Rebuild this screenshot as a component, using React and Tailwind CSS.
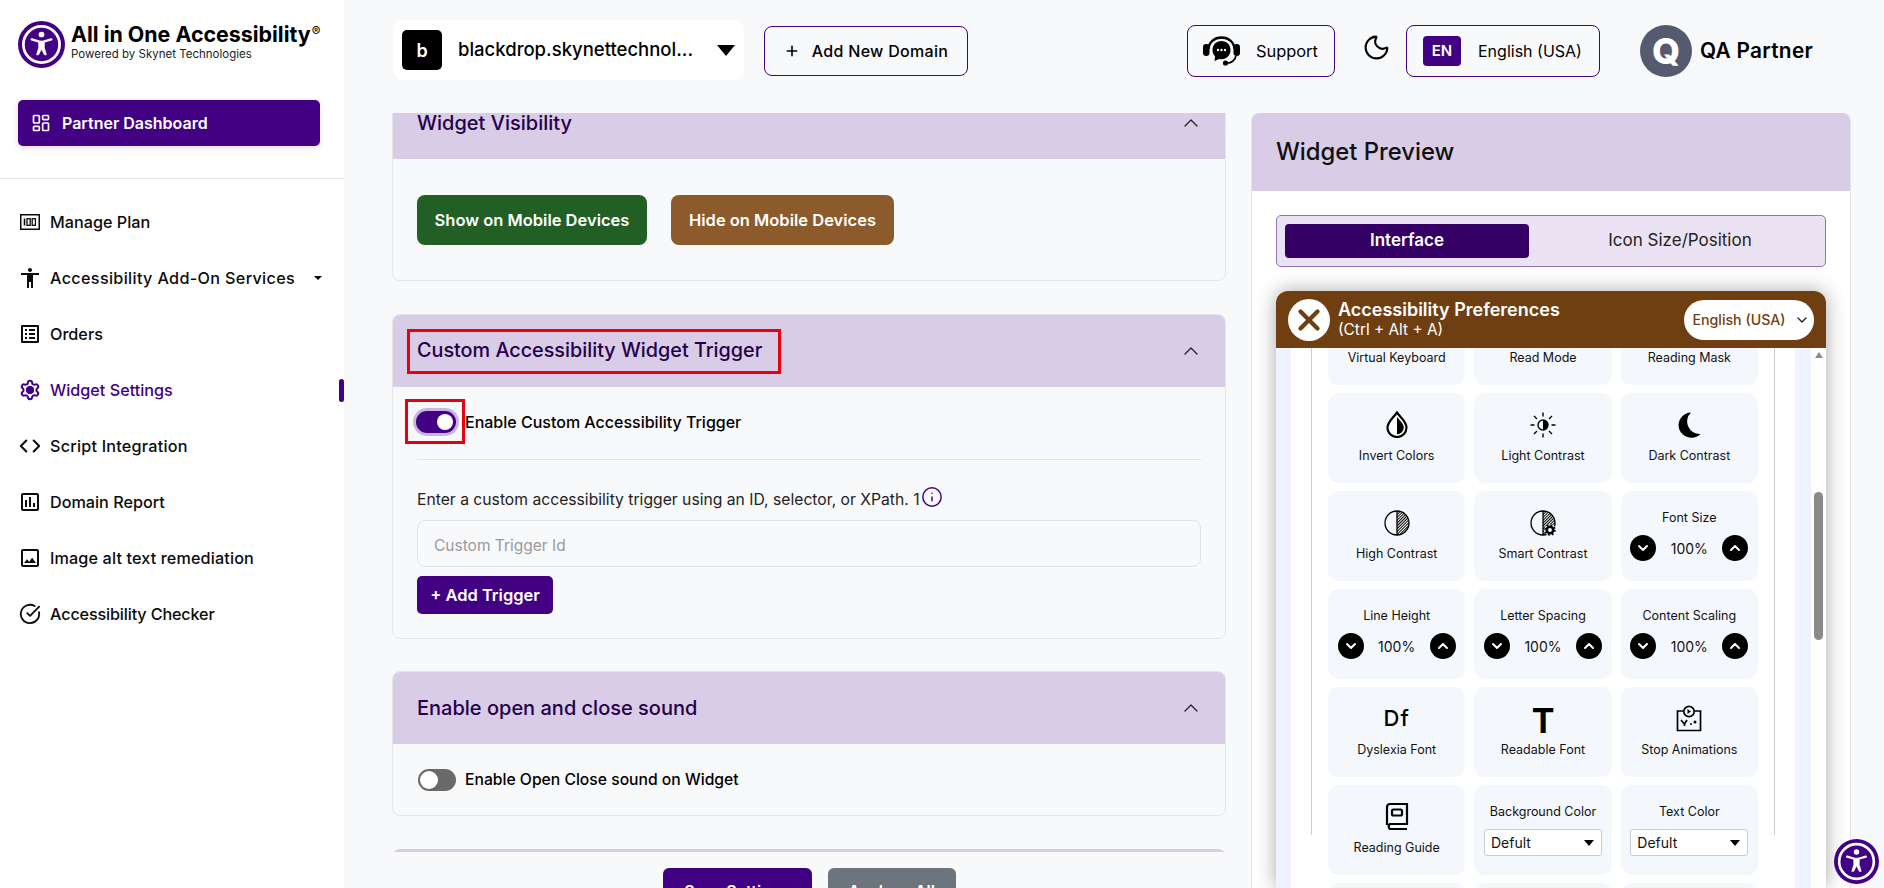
import React from 'react';
import { ChevronUp, ChevronDown, LayoutDashboard, Settings, CircleCheckBig, Code, Info, Moon, Plus, X } from 'lucide-react';
import { MdAccessibility, MdOutlineListAlt, MdOutlineAssessment, MdOutlineImage } from 'react-icons/md';

const navItems = [
  { label: 'Manage Plan', icon: <PlanIcon /> },
  { label: 'Accessibility Add-On Services', icon: <MdAccessibility size={24} />, caret: true, track: 'tracking-[0.33px]' },
  { label: 'Orders', icon: <MdOutlineListAlt size={24} /> },
  { label: 'Widget Settings', icon: <GearIcon />, active: true },
  { label: 'Script Integration', icon: <Code size={22} strokeWidth={2.2} />, track: 'tracking-[0.22px]' },
  { label: 'Domain Report', icon: <MdOutlineAssessment size={24} /> },
  { label: 'Image alt text remediation', icon: <MdOutlineImage size={24} />, track: 'tracking-[0.13px]' },
  { label: 'Accessibility Checker', icon: <CircleCheckBig size={22} strokeWidth={2} />, track: 'tracking-[-0.15px]' },
];

function PlanIcon() {
  return (
    <svg width="20" height="16" viewBox="0 0 20 16" fill="none" stroke="currentColor">
      <rect x="0.75" y="0.75" width="18.5" height="14.5" strokeWidth="1.5" />
      <path d="M4.5 4.5v7" strokeWidth="1.6" />
      <rect x="7" y="4.7" width="3.2" height="6.6" strokeWidth="1.3" />
      <rect x="12.2" y="4.7" width="3.2" height="6.6" strokeWidth="1.3" />
    </svg>
  );
}

function GearIcon() {
  return (
    <span className="relative flex items-center justify-center">
      <Settings size={22} strokeWidth={2.2} />
      <span className="absolute h-[8px] w-[8px] rounded-full bg-[#420083]" />
    </span>
  );
}

function A11yLogo({ size }) {
  return (
    <svg width={size} height={size} viewBox="0 0 48 48">
      <circle cx="24" cy="24" r="24" fill="#420083" />
      <circle cx="24" cy="24" r="18.5" fill="none" stroke="#fff" strokeWidth="2.8" />
      <circle cx="24" cy="13.8" r="2.9" fill="#fff" />
      <path d="M14 18.8 21 20.8M34 18.8 27 20.8" stroke="#fff" strokeWidth="2.4" strokeLinecap="round" />
      <path d="M21 20.5H27L26.8 27L29 34.5H27L24 28.5L21 34.5H19L21.2 27Z" fill="#fff" stroke="#fff" strokeWidth="0.8" strokeLinejoin="round" />
    </svg>
  );
}

function SupportIcon() {
  return (
    <svg width="37" height="30" viewBox="0 0 37 30">
      <path d="M5.500 13C6 6 11.500 1.500 18.500 1.500S31 6 31.500 13" fill="none" stroke="#000" strokeWidth="2.400" />
      <rect x="0" y="8" width="6.500" height="12" rx="3.200" fill="#000" />
      <rect x="30.500" y="8" width="6.500" height="12" rx="3.200" fill="#000" />
      <path d="M18.500 5C13.300 5 9.500 8.900 9.500 14c0 2.500 1 4.800 2.600 6.400L11.500 25l4.600-2c.8.200 1.600.300 2.400.300 5.200 0 9-4.100 9-9.300S23.700 5 18.500 5Z" fill="#000" />
      <circle cx="15" cy="14" r="1.200" fill="#fff" />
      <circle cx="18.500" cy="14" r="1.200" fill="#fff" />
      <circle cx="22" cy="14" r="1.200" fill="#fff" />
      <path d="M33 19.500c-.5 4.500-4.500 7.500-9 7.700" fill="none" stroke="#000" strokeWidth="1.800" />
      <circle cx="22.500" cy="27" r="2.600" fill="#000" />
    </svg>
  );
}

function Hatch({ id }) {
  return (
    <defs>
      <pattern id={id} width="2" height="2" patternUnits="userSpaceOnUse" patternTransform="rotate(45)">
        <rect width="2" height="2" fill="#fff" />
        <rect width="1" height="2" fill="#000" />
      </pattern>
    </defs>
  );
}

function InvertIcon() {
  return (
    <svg width="22" height="27" viewBox="0 0 22 27">
      <path d="M11 1.500C7 7 1.500 11 1.500 16.500a9.500 9.500 0 0 0 19 0C20.500 11 15 7 11 1.500Z" fill="#fff" stroke="#000" strokeWidth="2.200" />
      <path d="M11 6C14 9.500 17.800 13 17.800 16.500A6.800 6.800 0 0 1 11 23.300Z" fill="#000" />
    </svg>
  );
}

function LightIcon() {
  return (
    <svg width="26" height="26" viewBox="0 0 26 26" fill="none" stroke="#000" strokeWidth="1.400">
      <circle cx="13" cy="13" r="5" />
      <path d="M13 8a5 5 0 0 1 0 10Z" fill="#000" stroke="none" />
      <path d="M13 0.500v4M13 21.500v4M0.500 13h4M21.500 13h4M4 4l3 3M19 19l3 3M22 4l-3 3M7 19l-3 3" />
    </svg>
  );
}

function DarkIcon() {
  return (
    <svg width="24" height="26" viewBox="0 0 24 26">
      <path d="M14 0.500A12.500 12.500 0 0 0 23.500 22 13 13 0 0 1 1.500 13 13 13 0 0 1 14 0.500Z" fill="#000" />
    </svg>
  );
}

function HighIcon() {
  return (
    <svg width="26" height="26" viewBox="0 0 26 26">
      <Hatch id="high" />
      <path d="M13 1a12 12 0 0 1 0 24Z" fill="url(#high)" />
      <circle cx="13" cy="13" r="12" fill="none" stroke="#000" strokeWidth="1.300" />
      <path d="M13 1v24" stroke="#000" strokeWidth="1.300" />
    </svg>
  );
}

function SmartIcon() {
  return (
    <svg width="26" height="26" viewBox="0 0 26 26">
      <Hatch id="smart" />
      <path d="M13 1a12 12 0 0 1 0 24Z" fill="url(#smart)" />
      <circle cx="13" cy="13" r="12" fill="none" stroke="#000" strokeWidth="1.300" />
      <path d="M13 1v24" stroke="#000" strokeWidth="1.300" />
      <circle cx="20" cy="20" r="5.800" fill="#f4f8fd" />
      <circle cx="20" cy="20" r="3.200" fill="#fff" stroke="#000" strokeWidth="2.600" />
      <circle cx="20" cy="20" r="5" fill="none" stroke="#000" strokeWidth="1.600" strokeDasharray="1.900 2" />
    </svg>
  );
}

function StopIcon() {
  return (
    <svg width="26" height="27" viewBox="0 0 26 27" fill="none" stroke="#000" strokeWidth="1.700">
      <path d="M8 6H1.500v19.500h23V6H18" />
      <circle cx="13" cy="6.500" r="5.200" />
      <path d="M11.500 4v5l3.500-2.500Z" fill="#000" stroke="none" />
      <path d="M5 15l3.500 4L11 15M8.500 19v2" />
      <circle cx="19" cy="17" r="1.500" fill="#000" stroke="none" />
      <circle cx="15" cy="19" r="1" fill="#000" stroke="none" />
    </svg>
  );
}

function GuideIcon() {
  return (
    <svg width="24" height="27" viewBox="0 0 24 27" fill="none" stroke="#000" strokeWidth="2.200">
      <path d="M2 22V4a3 3 0 0 1 3-3h17v20H5a3 3 0 0 0 0 5h17" />
      <rect x="7" y="6.500" width="10" height="6" rx="1.500" />
    </svg>
  );
}

const tileRows = [
  [{ label: 'Virtual Keyboard' }, { label: 'Read Mode' }, { label: 'Reading Mask' }],
  [{ label: 'Invert Colors', icon: <InvertIcon /> }, { label: 'Light Contrast', icon: <LightIcon /> }, { label: 'Dark Contrast', icon: <DarkIcon /> }],
  [{ label: 'High Contrast', icon: <HighIcon /> }, { label: 'Smart Contrast', icon: <SmartIcon /> }, { label: 'Font Size', stepper: true }],
  [{ label: 'Line Height', stepper: true }, { label: 'Letter Spacing', stepper: true }, { label: 'Content Scaling', stepper: true }],
  [
    { label: 'Dyslexia Font', icon: <span className="mb-[3px] text-[22px] leading-none font-medium tracking-[1px]">Df</span> },
    { label: 'Readable Font', icon: <span className="translate-y-[6px] text-[34px] leading-none font-bold">T</span> },
    { label: 'Stop Animations', icon: <StopIcon /> },
  ],
  [{ label: 'Reading Guide', icon: <GuideIcon /> }, { label: 'Background Color', select: true }, { label: 'Text Color', select: true }],
  [{ label: '' }, { label: '' }, { label: '' }],
];

function Tile({ tile }) {
  if (tile.stepper) {
    return (
      <div className="flex h-[90px] flex-col items-center rounded-[10px] bg-[#f4f8fd] pt-[18px]">
        <span className="h-[18px] text-[12.5px] leading-[18px] text-[#111]">{tile.label}</span>
        <div className="mt-[8px] flex w-[118px] items-center justify-between">
          <span className="flex h-[26px] w-[26px] items-center justify-center rounded-full bg-black text-white"><ChevronDown size={16} strokeWidth={3} /></span>
          <span className="text-[14px] text-[#111]">100%</span>
          <span className="flex h-[26px] w-[26px] items-center justify-center rounded-full bg-black text-white"><ChevronUp size={16} strokeWidth={3} /></span>
        </div>
      </div>
    );
  }
  if (tile.select) {
    return (
      <div className="flex h-[90px] flex-col items-center rounded-[10px] bg-[#f4f8fd] pt-[18px]">
        <span className="h-[18px] text-[12.5px] leading-[18px] text-[#111]">{tile.label}</span>
        <div className="mt-[8px] flex h-[27px] w-[118px] items-center justify-between rounded-[3px] border border-[#ccc] bg-white pr-[7px] pl-[6px]">
          <span className="text-[14px] text-[#111]">Defult</span>
          <span className="h-0 w-0 border-x-[5px] border-t-[6px] border-x-transparent border-t-black" />
        </div>
      </div>
    );
  }
  return (
    <div className="flex h-[90px] flex-col items-center rounded-[10px] bg-[#f4f8fd]">
      <div className="flex h-[54px] items-end justify-center pb-[9px] text-black">{tile.icon}</div>
      <span className="h-[18px] text-[12.5px] leading-[18px] text-[#111]">{tile.label}</span>
    </div>
  );
}

function Toggle({ on }) {
  if (on) {
    return (
      <span className="flex h-[22px] w-[40px] items-center justify-end rounded-full bg-[#420083] pr-[3px] ring-[3px] ring-[#c9b4e3]">
        <span className="h-[16px] w-[16px] rounded-full bg-white" />
      </span>
    );
  }
  return (
    <span className="flex h-[22px] w-[38px] items-center rounded-full bg-[#6a6a6a] pl-[2px]">
      <span className="h-[18px] w-[18px] rounded-full bg-white" />
    </span>
  );
}

function Card({ title, titleBoxed, children, className }) {
  return (
    <section className={`overflow-hidden rounded-[8px] border border-[#e4e5ea] ${className}`}>
      <div className="flex h-[72px] items-center justify-between bg-[#d9cce6] pr-[22px] pl-[24px]">
        {titleBoxed ? (
          <h3 className="-ml-[10px] flex h-[45px] w-[374px] items-center border-[3px] border-[#e60012] pl-[7px] text-[19.8px] font-medium whitespace-nowrap text-[#24004a]">{title}</h3>
        ) : (
          <h3 className="text-[20px] font-medium text-[#24004a]">{title}</h3>
        )}
        <ChevronUp size={24} strokeWidth={1.3} className="text-[#222]" />
      </div>
      {children}
    </section>
  );
}

export default function App() {
  return (
    <div className="relative flex h-screen overflow-hidden bg-[#f8f9fb] font-['Inter',sans-serif] text-black">
      <aside className="w-[344px] shrink-0 bg-white">
        <div className="flex h-[100px] items-start pt-[21px] pl-[18px]">
          <A11yLogo size={47} />
          <div className="ml-[6px] flex flex-col">
            <span className="text-[21.4px] leading-[26px] font-bold whitespace-nowrap">All in One Accessibility<sup className="ml-[1px] text-[13px] font-normal">®</sup></span>
            <span className="text-[11.5px] leading-[14px] text-[#222]">Powered by Skynet Technologies</span>
          </div>
        </div>
        <div className="pr-[24px] pl-[18px]">
          <a className="flex h-[46px] items-center gap-[11px] rounded-[5px] bg-[#420083] pl-[13px] text-[16px] font-semibold text-white shadow-[0_2px_6px_rgba(66,0,131,0.15)]">
            <LayoutDashboard size={20} strokeWidth={2} />
            Partner Dashboard
          </a>
        </div>
        <div className="mt-[32px] border-t border-[#e5e6ea]" />
        <nav className="pt-[15px]">
          {navItems.map((item) => (
            <a key={item.label} className={`relative flex h-[56px] items-center pl-[18px] text-[16.2px] font-medium ${item.active ? 'text-[#420083]' : 'text-[#0c0c0c]'}`}>
              <span className="flex w-[24px] justify-center">{item.icon}</span>
              <span className={`ml-[8px] whitespace-nowrap ${item.track || ''}`}>{item.label}</span>
              {item.caret && <span className="ml-[19px] h-0 w-0 border-x-[4px] border-t-[4px] border-x-transparent border-t-black" />}
              {item.active && <span className="absolute top-[17px] right-0 h-[23px] w-[5px] rounded-full bg-[#420083]" />}
            </a>
          ))}
        </nav>
      </aside>

      <main className="flex min-w-0 flex-1 flex-col">
        <header className="flex h-[113px] shrink-0 pt-[20px] pl-[49px]">
          <div className="flex h-[60px] w-[351px] items-center rounded-[10px] bg-white pl-[9px]">
            <span className="flex h-[40px] w-[40px] items-center justify-center rounded-[5px] bg-black text-[18px] font-semibold text-white">b</span>
            <span className="ml-[16px] w-[254px] text-[18.5px] font-medium whitespace-nowrap">blackdrop.skynettechnol...</span>
            <span className="ml-[5px] h-0 w-0 border-x-[9px] border-t-[11px] border-x-transparent border-t-black" />
          </div>
          <a className="mt-[6px] ml-[20px] flex h-[50px] w-[204px] items-center justify-center gap-[12px] rounded-[8px] border border-[#420083] text-[16px] font-medium tracking-[0.3px] whitespace-nowrap">
            <Plus size={16} strokeWidth={2.4} />
            Add New Domain
          </a>
          <a className="mt-[5px] ml-[219px] flex h-[52px] w-[148px] items-center rounded-[8px] border border-[#420083] pl-[15px]">
            <SupportIcon />
            <span className="ml-[16px] text-[16.4px]">Support</span>
          </a>
          <Moon size={29} strokeWidth={1.7} className="mt-[13px] ml-[27px]" />
          <a className="mt-[5px] ml-[15px] flex h-[52px] w-[194px] items-center rounded-[8px] border border-[#420083] pl-[16px]">
            <span className="flex h-[30px] w-[38px] items-center justify-center rounded-[4px] bg-[#420083] text-[15px] font-semibold text-white">EN</span>
            <span className="ml-[17px] text-[16px] whitespace-nowrap">English (USA)</span>
          </a>
          <span className="mt-[5px] ml-[40px] flex h-[52px] w-[52px] items-center justify-center rounded-full bg-[#565a6e] text-[36px] font-extrabold text-white">Q</span>
          <span className="mt-[5px] ml-[8px] flex h-[52px] items-center text-[20.8px] font-semibold tracking-[0.3px] whitespace-nowrap">QA Partner</span>
        </header>

        <div className="flex min-h-0 flex-1 pl-[48px]">
          <div className="flex w-[834px] shrink-0 flex-col">
            <div className="h-[739px] shrink-0 overflow-hidden">
              <div className="-mt-[27px] flex flex-col">
                <Card title="Widget Visibility">
                  <div className="flex h-[121px] items-start gap-[24px] pt-[36px] pl-[24px]">
                    <button className="h-[50px] w-[230px] rounded-[8px] bg-[#225f25] text-[16.5px] font-semibold whitespace-nowrap text-white">Show on Mobile Devices</button>
                    <button className="h-[50px] w-[223px] rounded-[8px] bg-[#8c5a2b] text-[16.5px] font-semibold whitespace-nowrap text-white">Hide on Mobile Devices</button>
                  </div>
                </Card>
                <Card title="Custom Accessibility Widget Trigger" titleBoxed className="mt-[33px]">
                  <div className="px-[24px] pt-[12px] pb-[24px]">
                    <div className="flex items-center">
                      <span className="-ml-[12px] flex h-[45px] w-[60px] items-center border-[3px] border-[#e60012] pl-[8px]">
                        <Toggle on />
                      </span>
                      <span className="text-[16px] font-medium">Enable Custom Accessibility Trigger</span>
                    </div>
                    <div className="mt-[15px] border-t border-[#e2e3e8]" />
                    <div className="mt-[29px] flex h-[22px] items-center text-[15.7px] text-[#222]">
                      Enter a custom accessibility trigger using an ID, selector, or XPath. 1
                      <Info size={22} strokeWidth={1.6} className="ml-[1px] -translate-y-[3px] text-[#420083]" />
                    </div>
                    <input placeholder="Custom Trigger Id" className="mt-[9px] h-[47px] w-full rounded-[8px] border border-[#e2e3e8] bg-transparent pt-[3px] pl-[16px] text-[15.5px] placeholder:text-[#9a9a9a]" />
                    <button className="mt-[9px] h-[38px] w-[136px] rounded-[5px] bg-[#420083] text-[16.5px] font-semibold text-white">+ Add Trigger</button>
                  </div>
                </Card>
                <Card title="Enable open and close sound" className="mt-[32px]">
                  <div className="flex h-[71px] items-center pl-[25px]">
                    <Toggle />
                    <span className="ml-[9px] text-[15.7px] font-medium">Enable Open Close sound on Widget</span>
                  </div>
                </Card>
                <div className="mt-[33px] h-[60px] rounded-t-[8px] bg-[#d9cce6]" />
              </div>
            </div>
            <div className="flex justify-center gap-[16px] pt-[16px]">
              <button className="h-[46px] w-[149px] rounded-[6px] bg-[#420083] text-[16px] font-semibold text-white">Save Settings</button>
              <button className="h-[46px] w-[128px] rounded-[6px] bg-[#6c757d] text-[16px] font-semibold text-white">Analyze All</button>
            </div>
          </div>

          <section className="ml-[25px] flex h-[775px] w-[600px] shrink-0 flex-col overflow-hidden rounded-t-[8px] border border-y-0 border-[#e4e5ea] bg-white">
            <div className="flex h-[78px] shrink-0 items-center bg-[#d9cce6] pl-[24px] text-[23.8px] font-medium text-[#111]">Widget Preview</div>
            <div className="mx-[24px] mt-[24px] flex h-[52px] shrink-0 items-center rounded-[5px] border border-[#8f75b0] bg-[#ebe3f3] px-[8px]">
              <span className="flex h-[34px] w-[244px] items-center justify-center rounded-[4px] bg-[#340066] text-[17px] font-semibold text-white">Interface</span>
              <span className="flex-1 pl-[14px] text-center text-[17px] text-[#222]">Icon Size/Position</span>
            </div>
            <div className="mx-[24px] mt-[24px] flex min-h-0 flex-1 flex-col rounded-t-[12px] bg-white shadow-[0_0_20px_rgba(0,0,0,0.35)]">
              <div className="flex h-[57px] shrink-0 items-center rounded-t-[12px] bg-[#6f3f12] px-[12px]">
                <span className="flex h-[42px] w-[42px] items-center justify-center rounded-full bg-white text-[#6f3f12]"><X size={34} strokeWidth={3} /></span>
                <div className="ml-[8px] flex flex-col text-white">
                  <span className="text-[18px] leading-[20px] font-semibold">Accessibility Preferences</span>
                  <span className="text-[15.4px] leading-[20px]">(Ctrl + Alt + A)</span>
                </div>
                <span className="ml-auto flex h-[40px] w-[130px] items-center justify-center gap-[8px] rounded-full bg-white pl-[4px] text-[14.2px] font-medium text-[#6f3f12]">
                  English (USA)
                  <ChevronDown size={16} strokeWidth={2} className="text-[#222]" />
                </span>
              </div>
              <div className="flex min-h-0 flex-1 overflow-hidden">
                <div className="w-[15px] shrink-0 bg-[#eef3fd]" />
                <div className="w-[504px] shrink-0 bg-white px-[20px]">
                  <div className="h-full border-x border-[#cfcfcf] px-[16px]">
                    <div className="-mt-[53px] grid grid-cols-3 gap-x-[9px] gap-y-[8px]">
                      {tileRows.flat().map((tile, i) => (
                        <Tile key={i} tile={tile} />
                      ))}
                    </div>
                  </div>
                </div>
                <div className="w-[16px] shrink-0 bg-[#eef3fd]" />
                <div className="flex flex-1 flex-col items-center px-[3px] pt-[4px]">
                  <span className="h-0 w-0 border-x-[4.500px] border-b-[6px] border-x-transparent border-b-[#8a8a8a]" />
                  <span className="mt-[134px] h-[148px] w-[9px] rounded-full bg-[#8a8a8a]" />
                </div>
              </div>
            </div>
          </section>
        </div>
      </main>

      <span className="absolute top-[839px] left-[1834px]">
        <A11yLogo size={45} />
      </span>
    </div>
  );
}
